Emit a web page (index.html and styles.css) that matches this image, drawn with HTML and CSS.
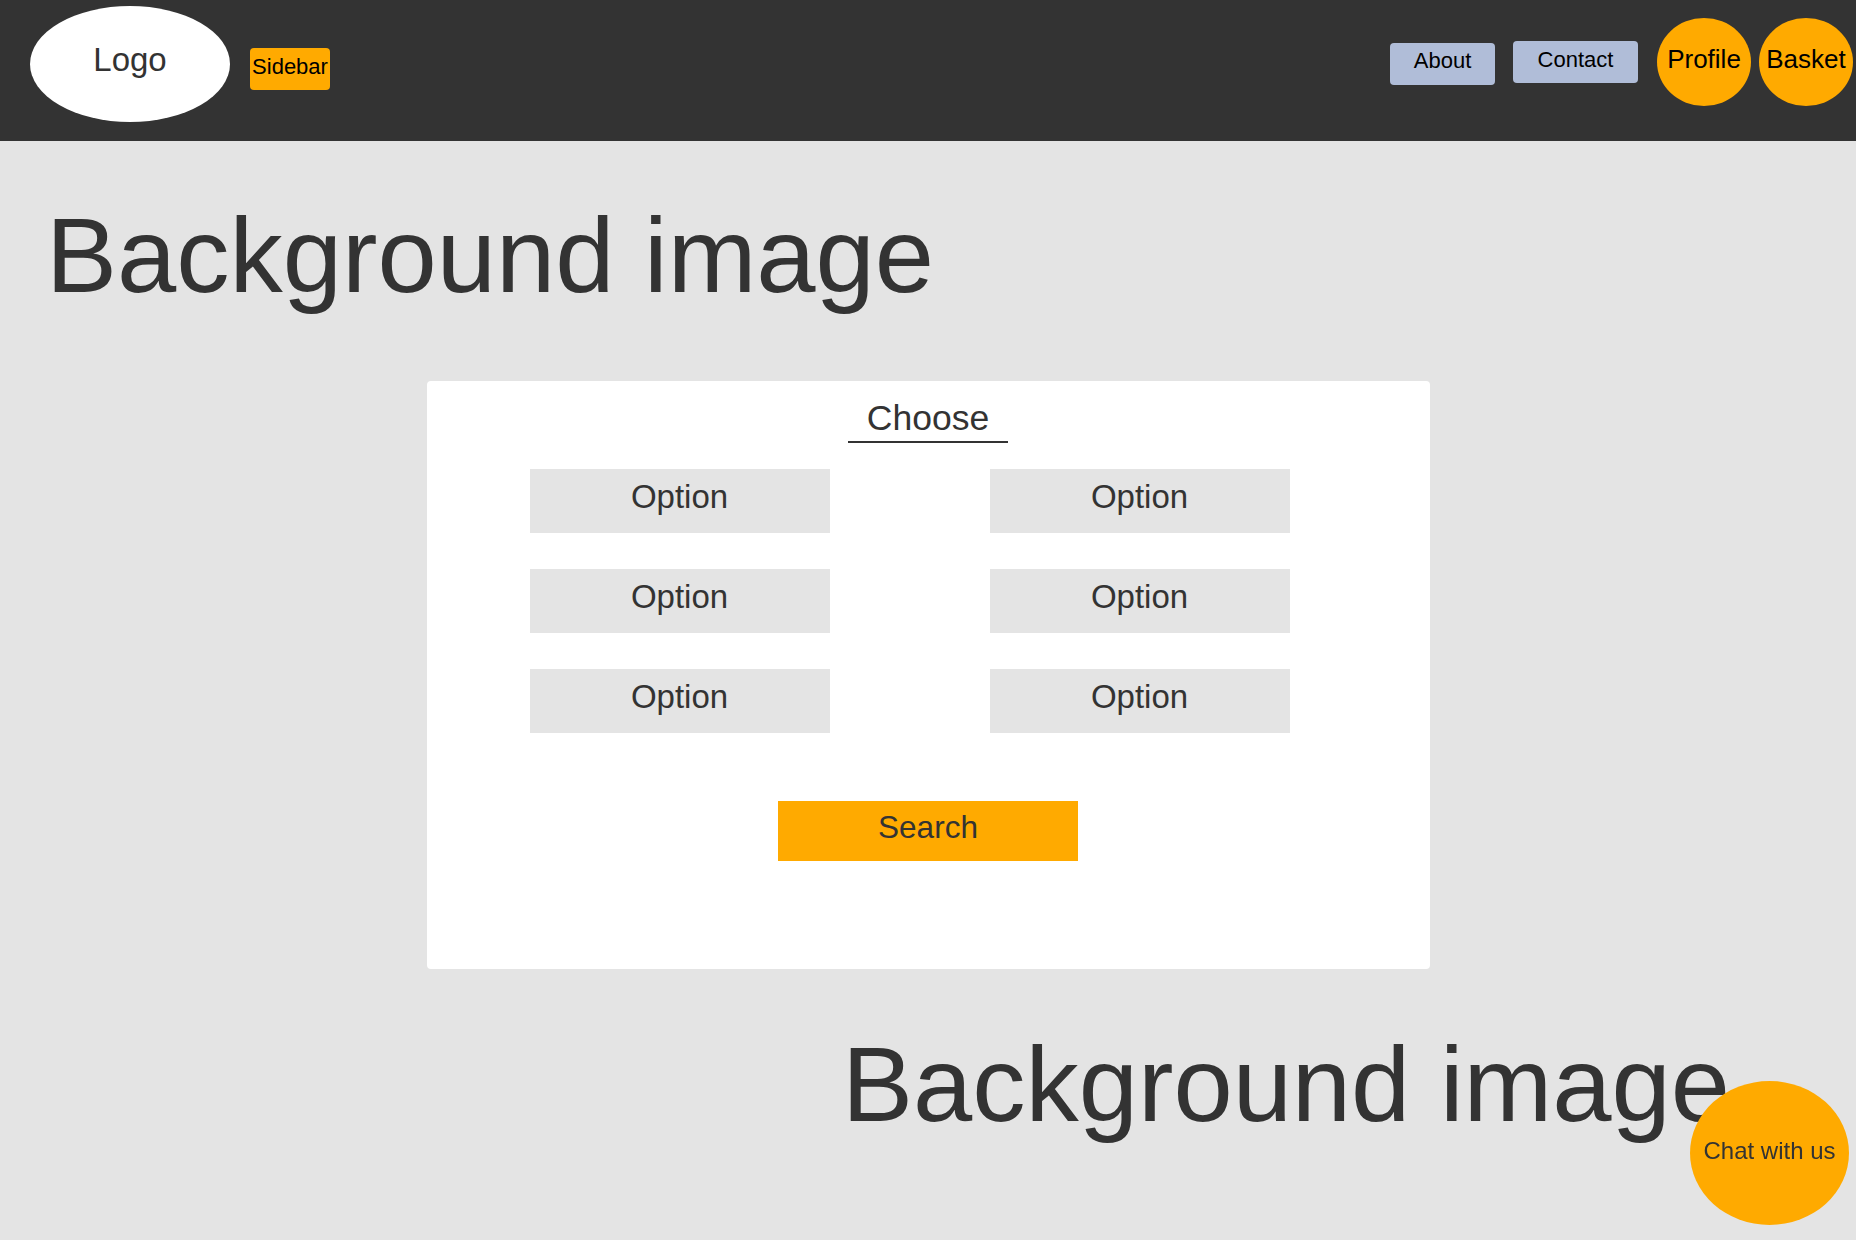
FILE: index.html
```html
<!DOCTYPE html>
<html lang="en">
<head>
<meta charset="utf-8">
<title>Search page</title>
<link rel="stylesheet" href="styles.css">
</head>
<body>
<header class="topbar">
  <div class="logo">Logo</div>
  <div class="sidebar-btn">Sidebar</div>
  <nav class="nav">
    <a class="nav-btn nav-btn--about">About</a>
    <a class="nav-btn nav-btn--contact">Contact</a>
    <a class="nav-circle nav-circle--profile">Profile</a>
    <a class="nav-circle nav-circle--basket">Basket</a>
  </nav>
</header>
<main class="hero">
  <h1 class="bg-title">Background image</h1>
  <section class="card">
    <h2 class="card-title">Choose</h2>
    <div class="options">
      <div class="option">Option</div>
      <div class="option">Option</div>
      <div class="option">Option</div>
      <div class="option">Option</div>
      <div class="option">Option</div>
      <div class="option">Option</div>
    </div>
    <div class="search">Search</div>
  </section>
  <h1 class="bg-title bg-title--right">Background image</h1>
</main>
<div class="chat">Chat with us</div>
</body>
</html>
```

FILE: styles.css
```css
* {
  box-sizing: border-box;
}

html, body {
  margin: 0;
  padding: 0;
}

body {
  background: #e4e4e4;
  font-family: "Liberation Sans", Arial, sans-serif;
  color: #333333;
  min-height: 1240px;
}

.topbar {
  display: flex;
  align-items: flex-start;
  height: 141px;
  background: #333333;
  padding: 0 3px 0 30px;
}

.logo {
  width: 200px;
  height: 116px;
  margin-top: 6px;
  border-radius: 50%;
  background: #ffffff;
  color: #333333;
  font-size: 33px;
  text-align: center;
  padding-top: 35px;
}

.sidebar-btn {
  width: 80px;
  height: 42px;
  margin: 48px 0 0 20px;
  background: #ffaa00;
  border-radius: 4px;
  color: #000000;
  font-size: 22px;
  text-align: center;
  white-space: nowrap;
  padding-top: 6px;
}

.nav {
  display: flex;
  align-items: flex-start;
  margin-left: auto;
}

.nav-btn {
  display: block;
  height: 42px;
  background: #b0bdd8;
  border-radius: 4px;
  color: #000000;
  font-size: 22px;
  text-align: center;
  white-space: nowrap;
}

.nav-btn--about {
  width: 105px;
  margin-top: 43px;
  padding-top: 5px;
}

.nav-btn--contact {
  width: 125px;
  margin: 41px 0 0 18px;
  padding-top: 6px;
}

.nav-circle {
  display: block;
  width: 94px;
  height: 88px;
  margin-top: 18px;
  border-radius: 50%;
  background: #ffaa00;
  color: #000000;
  font-size: 26px;
  text-align: center;
  white-space: nowrap;
  padding-top: 26px;
}

.nav-circle--profile {
  margin-left: 19px;
}

.nav-circle--basket {
  margin-left: 8px;
}

.hero {
  display: flex;
  flex-direction: column;
}

.bg-title {
  margin: 54px 0 0 46px;
  font-size: 106.5px;
  font-weight: 400;
  line-height: 122px;
  color: #333333;
  white-space: nowrap;
}

.bg-title--right {
  margin: 55px 0 0 0;
  padding-right: 126px;
  text-align: right;
}

.card {
  width: 1003px;
  margin: 64px auto 0;
  background: #ffffff;
  border-radius: 4px;
  padding: 18px 0 108px;
}

.card-title {
  width: 160px;
  margin: 0 auto;
  font-size: 35.5px;
  font-weight: 400;
  line-height: 39px;
  text-align: center;
  color: #333333;
  padding-bottom: 3px;
  border-bottom: 2px solid #333333;
}

.options {
  display: grid;
  grid-template-columns: 300px 300px;
  column-gap: 160px;
  row-gap: 36px;
  margin-top: 26px;
  padding-left: 103px;
}

.option {
  height: 64px;
  background: #e4e4e4;
  font-size: 33px;
  text-align: center;
  padding-top: 9px;
  color: #333333;
}

.search {
  width: 300px;
  height: 60px;
  margin: 68px auto 0;
  background: #ffaa00;
  font-size: 31.5px;
  text-align: center;
  padding-top: 8px;
  color: #333333;
}

.chat {
  position: fixed;
  right: 7px;
  bottom: 15px;
  width: 159px;
  height: 144px;
  border-radius: 50%;
  background: #ffaa00;
  color: #333333;
  font-size: 24px;
  text-align: center;
  white-space: nowrap;
  padding-top: 56px;
}
```
